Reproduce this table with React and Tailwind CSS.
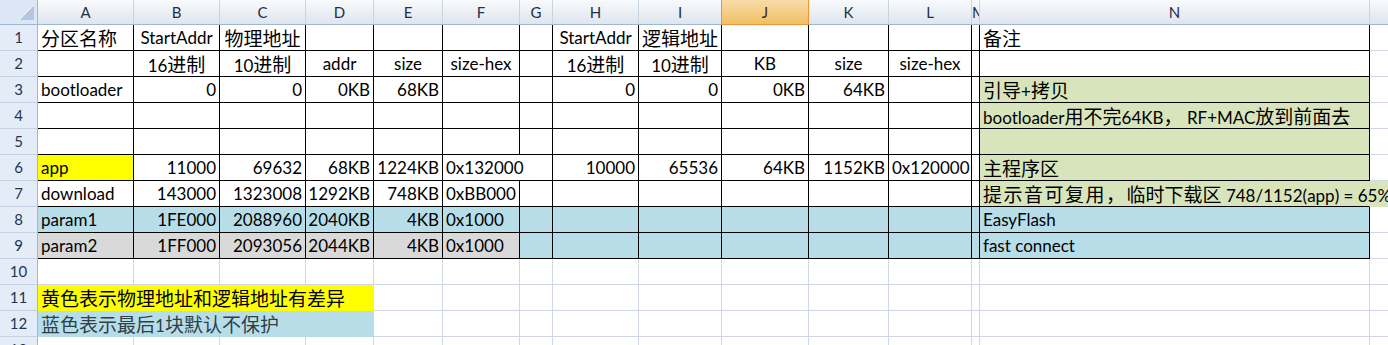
import React from "react";

const GRN = "bg-[#d8e4bc]";
const YEL = "bg-[#ffff00]";
const BLU = "bg-[#b7dee8]";
const GRY = "bg-[#d9d9d9]";

const COLS = ["A", "B", "C", "D", "E", "F", "G", "H", "I", "J", "K", "L", "M", "N", "O"];

const c = (t, a = "l", bg = "", o = {}) => ({ t, a, bg, ...o });

const CJKCLS = "font-['Noto_Sans_CJK_SC',sans-serif] text-[19px]";

const n7 = (
  <>
    <span className={CJKCLS + " tracking-[1.5px]"}>提示音可复用，</span>
    <span className={CJKCLS}>临时下载区</span> 748/1152(app) = 65%
  </>
);

const data = {
  1: { A: c("分区名称"), B: c("StartAddr", "c"), C: c("物理地址", "c"), H: c("StartAddr", "c"), I: c("逻辑地址", "c"), N: c("备注") },
  2: {
    B: c("16进制", "c"), C: c("10进制", "c"), D: c("addr", "c"), E: c("size", "c"), F: c("size-hex", "c"),
    H: c("16进制", "c"), I: c("10进制", "c"), J: c("KB", "c"), K: c("size", "c"), L: c("size-hex", "c"),
  },
  3: {
    A: c("bootloader"), B: c("0", "r"), C: c("0", "r"), D: c("0KB", "r"), E: c("68KB", "r"),
    H: c("0", "r"), I: c("0", "r"), J: c("0KB", "r"), K: c("64KB", "r"), N: c("引导+拷贝", "l", GRN),
  },
  4: { N: c("bootloader用不完64KB， RF+MAC放到前面去", "l", GRN) },
  5: { N: c("", "l", GRN) },
  6: {
    A: c("app", "l", YEL), B: c("11000", "r"), C: c("69632", "r"), D: c("68KB", "r"), E: c("1224KB", "r"),
    F: c("0x132000", "l", "", { span: 2 }), H: c("10000", "r"), I: c("65536", "r"), J: c("64KB", "r"),
    K: c("1152KB", "r"), L: c("0x120000"), N: c("主程序区", "l", GRN),
  },
  7: {
    A: c("download"), B: c("143000", "r"), C: c("1323008", "r"), D: c("1292KB", "r"), E: c("748KB", "r"),
    F: c("0xBB000"), N: c("", "l", GRN, { over: true, node: n7 }), O: c("", "l", GRN),
  },
  8: {
    A: c("param1", "l", BLU), B: c("1FE000", "r", BLU), C: c("2088960", "r", BLU), D: c("2040KB", "r", BLU),
    E: c("4KB", "r", BLU), F: c("0x1000", "l", BLU), G: c("", "l", BLU), H: c("", "l", BLU), I: c("", "l", BLU),
    J: c("", "l", BLU), K: c("", "l", BLU), L: c("", "l", BLU), M: c("", "l", BLU), N: c("EasyFlash", "l", BLU),
  },
  9: {
    A: c("param2", "l", GRY), B: c("1FF000", "r", GRY), C: c("2093056", "r", GRY), D: c("2044KB", "r", GRY),
    E: c("4KB", "r", GRY), F: c("0x1000", "l", GRY), G: c("", "l", BLU), H: c("", "l", BLU), I: c("", "l", BLU),
    J: c("", "l", BLU), K: c("", "l", BLU), L: c("", "l", BLU), M: c("", "l", BLU), N: c("fast connect", "l", BLU),
  },
  11: { A: c("黄色表示物理地址和逻辑地址有差异", "l", YEL, { span: 4 }) },
  12: { A: c("蓝色表示最后1块默认不保护", "l", BLU, { span: 4, soft: true }) },
};

const CJK = /([\u3000-\u303f\u4e00-\u9fff\uff00-\uffef]+)/;

function Txt({ s }) {
  const parts = s.split(CJK);
  return parts.map((p, i) =>
    i % 2 === 1 ? (
      <span key={i} className={CJKCLS}>
        {p}
      </span>
    ) : (
      <React.Fragment key={i}>{p}</React.Fragment>
    )
  );
}

function HeaderRow() {
  return (
    <>
      <div className="relative box-border border-r border-b border-r-[#9eb6ce] border-b-[#9eb6ce] bg-[#dce6f4]">
        <svg className="absolute left-0 top-0" width="37" height="24" viewBox="0 0 37 24">
          <polygon points="34,5 34,20 19,20" fill="#b3c6e2" />
          <line x1="34" y1="5" x2="19" y2="20" stroke="#f4f7fb" strokeWidth="1" />
        </svg>
      </div>
      {COLS.map((L) => {
        const sel = L === "J";
        const beforeSel = L === "I";
        return (
          <div
            key={L}
            className={
              "box-border border-b flex items-center overflow-hidden text-[15px] " +
              (L === "M" ? "justify-start " : "justify-center ") +
              (L === "O" ? "" : "border-r ") +
              (sel
                ? "bg-linear-to-b from-[#f9dca8] to-[#f1c062] border-r-[#f29436] border-b-[#f29436] text-[#3a2a10] "
                : "bg-linear-to-b from-[#f8fafc] to-[#dfe5ee] border-b-[#9eb6ce] text-[#1f2f45] " +
                  (beforeSel ? "border-r-[#f29436] " : "border-r-[#c9d4e2] "))
            }
          >
            {L === "O" ? "" : L}
          </div>
        );
      })}
    </>
  );
}

function BodyRow({ r }) {
  const row = data[r] || {};
  const out = [];
  out.push(
    <div
      key="h"
      className="box-border border-r border-b border-r-[#9eb6ce] border-b-[#c3d1e3] bg-[#e4ecf7] flex items-start pt-[3px] justify-center text-[15px] text-[#1f3553] leading-[18px] overflow-hidden"
    >
      {r}
    </div>
  );
  let skip = 0;
  COLS.forEach((L, idx) => {
    if (skip > 0) {
      skip--;
      return;
    }
    const col = idx + 1;
    const d = row[L] || c("");
    const span = d.span || 1;
    skip = span - 1;
    const lastCol = col + span - 1;
    const bordered = r <= 9 && col <= 14;
    const rightBordered = r <= 9 && lastCol <= 14;
    let rc, bc;
    if (bordered) {
      rc = rightBordered ? "border-r-black" : "border-r-[#d0d7e5]";
      bc = "border-b-black";
    } else if (d.bg) {
      rc = "border-r-transparent";
      bc = "border-b-transparent";
    } else {
      rc = "border-r-[#d0d7e5]";
      bc = "border-b-[#d0d7e5]";
    }
    if (d.over) rc = "border-r-transparent";
    const align = d.a === "r" ? "text-right pr-[3px]" : d.a === "c" ? "text-center" : "text-left pl-[3px]";
    const spanCls = span === 2 ? "col-span-2 " : span === 4 ? "col-span-4 " : "";
    out.push(
      <div
        key={L}
        className={
          "box-border border-b whitespace-nowrap leading-[25px] text-[17px] " +
          (L === "O" ? "border-r-0 " : "border-r ") +
          spanCls +
          (d.over ? "relative z-10 overflow-visible " : "overflow-hidden ") +
          (d.soft ? "text-[#2f3f48] " : "text-black ") +
          align +
          " " +
          (d.bg || "bg-white") +
          " " +
          rc +
          " " +
          bc
        }
      >
        {d.node ? d.node : d.t ? <Txt s={d.t} /> : null}
      </div>
    );
  });
  return out;
}

export default function App() {
  const rows = [1, 2, 3, 4, 5, 6, 7, 8, 9, 10, 11, 12, 13];
  return (
    <div className="w-[1388px] h-[345px] overflow-hidden bg-white font-['Lato','Noto_Sans_CJK_SC',sans-serif]">
      <div className="grid w-[1388px] grid-cols-[38px_96px_86px_86px_68px_69px_77px_33px_86px_83px_87px_80px_83px_8px_390px_1fr] grid-rows-[25px_repeat(13,26px)]">
        <HeaderRow />
        {rows.map((r) => (
          <BodyRow key={r} r={r} />
        ))}
      </div>
    </div>
  );
}
